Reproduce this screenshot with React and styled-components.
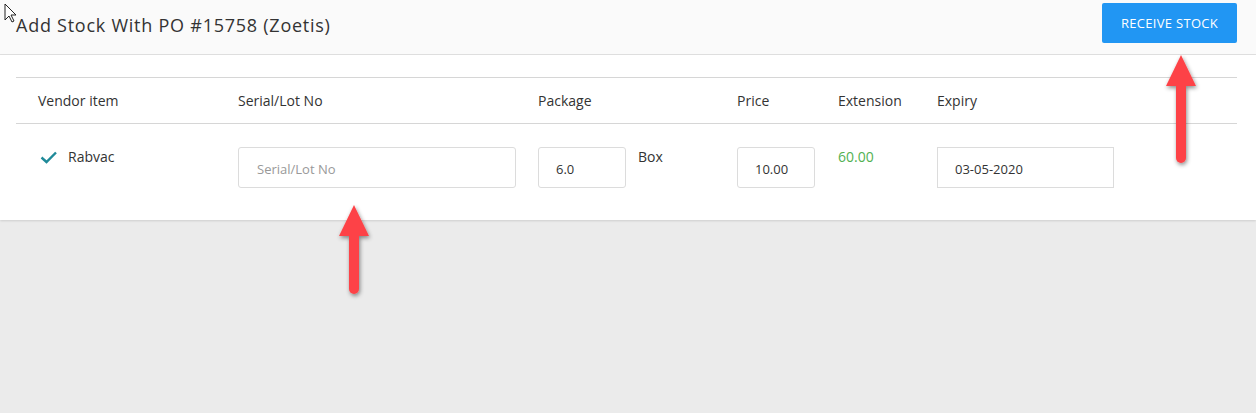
import React from "react";
import styled, { createGlobalStyle } from "styled-components";

const Global = createGlobalStyle`
  html, body { margin: 0; padding: 0; background: #ebebeb; }
  body { font-family: "Open Sans", "Noto Sans", sans-serif; color: #333; }
  * { box-sizing: border-box; }
`;

const Page = styled.div`
  position: relative;
  width: 1256px;
  height: 413px;
  background: #ebebeb;
  overflow: hidden;
`;

const Header = styled.header`
  height: 55px;
  background: #fafafa;
  border-bottom: 1px solid #e0e0e0;
  display: flex;
  align-items: flex-start;
  justify-content: space-between;
  padding: 3px 19px 0 16px;
`;

const Title = styled.h1`
  margin: 0;
  padding-top: 10px;
  font-size: 18px;
  font-weight: 400;
  line-height: 24px;
  color: #333;
  letter-spacing: 0.75px;
`;

const PrimaryButton = styled.button`
  width: 135px;
  height: 40px;
  border: none;
  border-radius: 2px;
  background: #2196f3;
  color: #fff;
  font-family: inherit;
  font-size: 13px;
  letter-spacing: 0.3px;
  text-transform: uppercase;
  cursor: pointer;
`;

const Panel = styled.section`
  background: #fff;
  padding: 22px 19px 0 16px;
  height: 165px;
  box-shadow: 0 1px 2px rgba(0, 0, 0, 0.12);
`;

const Row = styled.div`
  display: grid;
  grid-template-columns: 200px 300px 199px 101px 99px 1fr;
  padding-left: 22px;
  border-top: 1px solid #d6d6d6;
  align-items: ${(p) => (p.$head ? "center" : "start")};
  height: ${(p) => (p.$head ? "46px" : "auto")};
  padding-top: ${(p) => (p.$head ? "0" : "23px")};
`;

const HeadCell = styled.div`
  font-size: 14px;
  color: #333;
`;

const TextCell = styled.div`
  display: flex;
  align-items: center;
  gap: 11px;
  font-size: 14px;
  line-height: 20px;
  color: ${(p) => p.$color || "#333"};
`;

const InlineGroup = styled.div`
  display: flex;
  align-items: flex-start;
  gap: 12px;
`;

const Input = styled.input`
  width: ${(p) => p.$w}px;
  height: 41px;
  border: 1px solid #dcdcdc;
  border-radius: ${(p) => (p.$square ? "0" : "3px")};
  padding: 3px 0 0 ${(p) => p.$pl || 17}px;
  font-family: inherit;
  font-size: 13px;
  color: #333;
  background: #fff;
  outline: none;
  &::placeholder { color: #999; }
`;

const CheckIcon = styled.svg`
  margin-left: 2px;
`;

const Overlay = styled.svg`
  position: absolute;
  left: 0;
  top: 0;
  pointer-events: none;
  overflow: visible;
`;

const Arrow = ({ x, tip, bottom }) => (
  <g filter="url(#shadow)">
    <line x1={x} y1={tip + 25} x2={x} y2={bottom - 5} stroke="#fd4347" strokeWidth="10" strokeLinecap="round" />
    <polygon points={`${x},${tip} ${x - 15},${tip + 31} ${x + 15},${tip + 31}`} fill="#fd4347" />
  </g>
);

export default function App() {
  return (
    <Page>
      <Global />
      <Header>
        <Title>Add Stock With PO #15758 (Zoetis)</Title>
        <PrimaryButton>Receive Stock</PrimaryButton>
      </Header>
      <Panel>
        <Row $head>
          <HeadCell>Vendor item</HeadCell>
          <HeadCell>Serial/Lot No</HeadCell>
          <HeadCell>Package</HeadCell>
          <HeadCell>Price</HeadCell>
          <HeadCell>Extension</HeadCell>
          <HeadCell>Expiry</HeadCell>
        </Row>
        <Row>
          <TextCell>
            <CheckIcon width="17" height="14" viewBox="0 0 17 14">
              <path d="M1.5 7.5 L6.5 12 L16 2.5" fill="none" stroke="#1f8a99" strokeWidth="2.4" />
            </CheckIcon>
            Rabvac
          </TextCell>
          <div>
            <Input $w={278} $pl={18} placeholder="Serial/Lot No" />
          </div>
          <InlineGroup>
            <Input $w={88} defaultValue="6.0" />
            <TextCell>Box</TextCell>
          </InlineGroup>
          <div>
            <Input $w={78} defaultValue="10.00" />
          </div>
          <TextCell $color="#52b152">60.00</TextCell>
          <div>
            <Input $w={177} $square defaultValue="03-05-2020" />
          </div>
        </Row>
      </Panel>
      <Overlay width="1256" height="413">
        <defs>
          <filter id="shadow" x="-50%" y="-20%" width="200%" height="140%">
            <feDropShadow dx="1" dy="2" stdDeviation="2" floodColor="#000" floodOpacity="0.45" />
          </filter>
        </defs>
        <Arrow x={354} tip={205} bottom={294} />
        <Arrow x={1181} tip={55} bottom={163} />
        <path d="M5 4 L5 20 L9 16 L12 22 L14 21 L11 15 L16 15 Z" fill="#fff" stroke="#222" strokeWidth="1" />
      </Overlay>
    </Page>
  );
}
